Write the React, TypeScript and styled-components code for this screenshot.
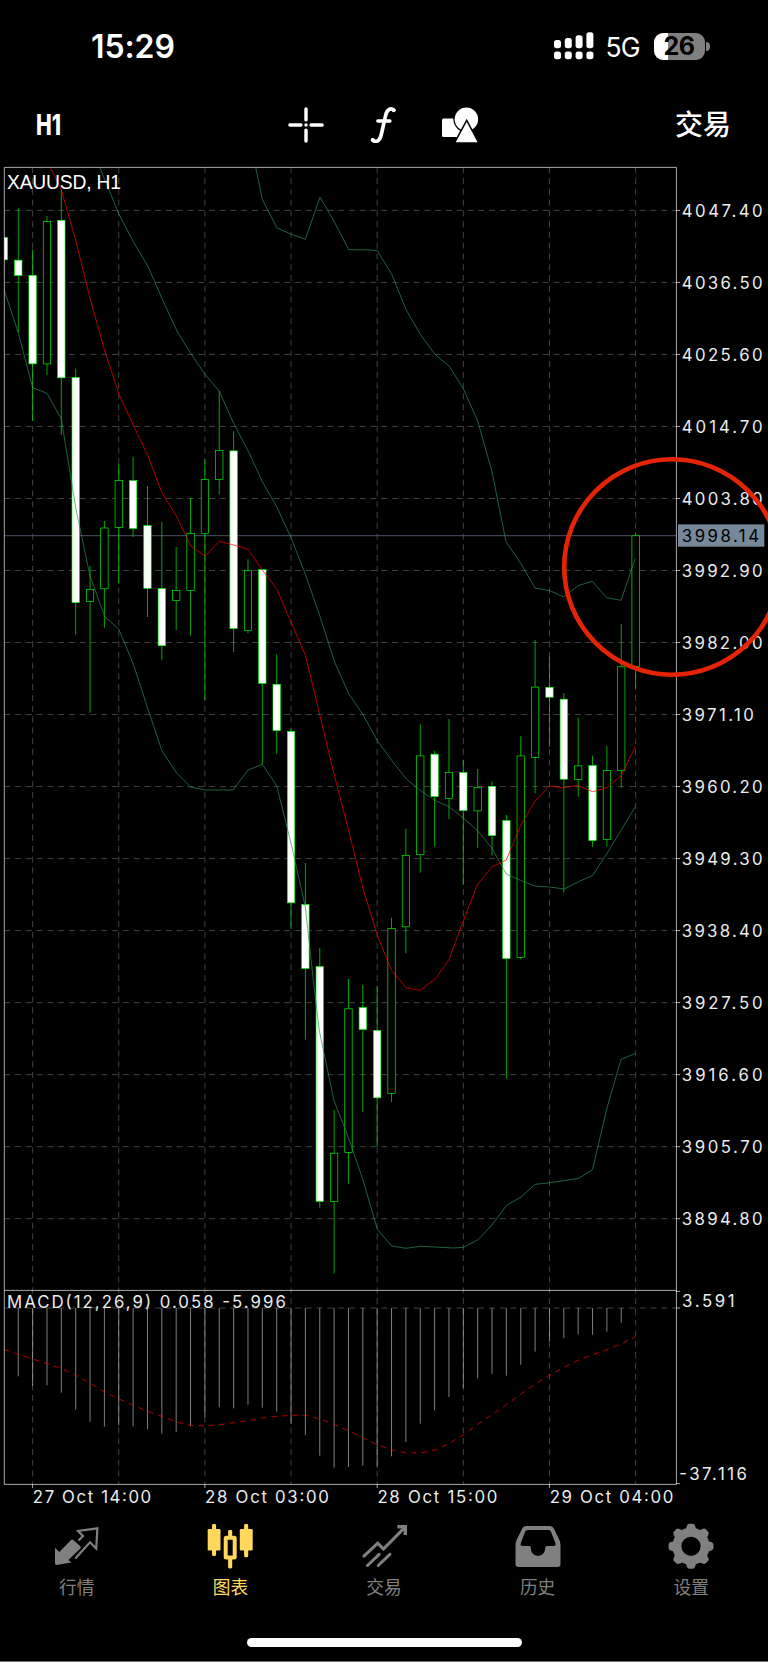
import React from "react";
import styled, { createGlobalStyle } from "styled-components";

const GlobalStyle = createGlobalStyle`
  html, body { margin: 0; padding: 0; background: #000; }
  * { box-sizing: border-box; }
`;

const Screen = styled.main`
  display: flex;
  flex-direction: column;
  width: 768px;
  height: 1662px;
  overflow: hidden;
  background: #000;
  color: #fff;
  font-family: Inter, "Noto Sans CJK SC", sans-serif;
  border-bottom: 1px solid #6e6e6e;
`;

const StatusBar = styled.header`
  display: flex;
  align-items: center;
  justify-content: space-between;
  height: 92px;
  padding: 0 58px 0 91px;
`;

const Clock = styled.time`
  padding-top: 2px;
  font-size: 32px;
  font-weight: 600;
  line-height: 40px;
  letter-spacing: -0.1px;
`;

const StatusGroup = styled.div`
  display: flex;
  align-items: center;
`;

const Network = styled.span`
  width: 60px;
  padding: 2px 0 0 12px;
  font-size: 26.5px;
  line-height: 32px;
  letter-spacing: -0.8px;
`;

const Battery = styled.div`
  display: flex;
  align-items: center;
  justify-content: center;
  width: 51px;
  height: 27px;
  border-radius: 9px;
  background: linear-gradient(90deg, #fff 0 13.5px, #808080 13.5px);
  color: #000;
  font-size: 25px;
  font-weight: 700;
  line-height: 27px;
  letter-spacing: -0.6px;
`;

const BatteryTip = styled.i`
  width: 4px;
  height: 9px;
  margin-left: 1.5px;
  border-radius: 0 5px 5px 0;
  background: #808080;
`;

const Toolbar = styled.nav`
  display: grid;
  grid-template-columns: 1fr auto 1fr;
  align-items: center;
  height: 65px;
  padding: 0 37px;
`;

const ToolButton = styled.button<{ $end?: boolean }>`
  justify-self: ${(p) => (p.$end ? "end" : "start")};
  padding: 0;
  border: 0;
  background: none;
  color: #fff;
  font: 500 28px/36px Inter, "Noto Sans CJK SC", sans-serif;
`;

const Timeframe = styled.span`
  display: inline-block;
  font-family: Inter, sans-serif;
  font-weight: 800;
  font-size: 28px;
  transform: translateX(-1px) scaleX(0.75);
  transform-origin: left center;
`;

const ToolGroup = styled.div`
  display: flex;
  align-items: center;
  gap: 42px;
  margin-right: 1px;
`;

const Chart = styled.svg`
  display: block;
  flex: none;
  width: 768px;
  height: 1358px;
  font-family: Inter, sans-serif;
`;

const AxisText = styled.text`
  fill: #ececec;
  font-size: 16.8px;
`;

const TabBar = styled.nav`
  display: grid;
  grid-template-columns: repeat(5, 1fr);
  height: 122px;
  padding-top: 7px;
`;

const Tab = styled.a<{ $active?: boolean }>`
  display: flex;
  flex-direction: column;
  align-items: center;
  color: ${(p) => (p.$active ? "#ffd85c" : "#808080")};
  font-size: 17.7px;
  line-height: 26px;
  gap: 5px;
`;

const HomeIndicator = styled.div`
  width: 275px;
  height: 9.6px;
  border-radius: 5px;
  margin: 0.7px auto 0;
  background: #fff;
`;

/* ---- chart data: x is derived from the bar index, y values are plot units ---- */
const X0 = 3.9;
const STEP = 14.357;
const bx = (i: number) => X0 + i * STEP;

type Bar = [number, number, number, number, 0 | 1]; // high, top, bottom, low, bearish
const bars: Bar[] = [
  [237.5, 237.5, 259.8, 259.8, 1], [207.7, 260.2, 275.4, 332, 1], [249.7, 275.3, 363.8, 421, 1],
  [216, 221.4, 363.9, 375, 0], [190, 220.3, 377.8, 435, 1], [368.7, 377.5, 602.5, 634.7, 1],
  [566, 589.5, 601.6, 712.7, 0], [521, 528, 588.8, 627.7, 0], [464, 480.5, 527.5, 583.3, 0],
  [456.7, 480.6, 528.4, 537, 1], [486, 525.6, 588.3, 617, 1], [522, 588.6, 645.7, 660.3, 1],
  [547, 590.5, 600.5, 630, 0], [497.7, 533.5, 590.3, 635.7, 0], [459.3, 479.5, 533.5, 700, 0],
  [391, 450.5, 479.5, 494.7, 0], [431.3, 450.9, 628.4, 652, 1], [559.3, 570.5, 630.5, 633.3, 0],
  [569, 569.6, 683.4, 764.7, 1], [654.5, 684.3, 730.5, 753.7, 1], [728.7, 731.5, 902.8, 929, 1],
  [863, 904.5, 968.4, 1039.7, 1], [948, 966.5, 1201.4, 1207.7, 1], [1110.3, 1153.2, 1201.5, 1273.3, 0],
  [979, 1008.8, 1152.4, 1183.7, 0], [985, 1007.6, 1029.5, 1112, 1], [986.7, 1030.4, 1097.8, 1146.7, 1],
  [917.7, 928.5, 1093.6, 1102, 0], [828.7, 855.5, 926.8, 953.3, 0], [724.3, 755.9, 854.6, 872.7, 0],
  [750.7, 754.2, 796.5, 846.7, 1], [719, 772.5, 798.3, 819, 0], [760, 772.5, 810.5, 884.7, 1],
  [769, 787.5, 810.9, 848, 0], [781.3, 786.5, 835.5, 855.7, 1], [815, 820.5, 958.5, 1078.5, 1],
  [736.3, 755.9, 957.3, 959.3, 0], [640, 687.1, 757.6, 793.3, 0], [656.7, 687.3, 697.2, 746.7, 1],
  [693, 699.2, 779.2, 892.7, 1], [717.3, 765.9, 779.6, 796.7, 0], [755.7, 765.5, 840.5, 846.7, 1],
  [746.3, 770.5, 839.5, 846.7, 0], [624, 666.8, 770.3, 787.7, 0], [532.7, 535.8, 666.6, 688.3, 0],
];

const upperBand =
  "255.7,167.3 262.3,199.3 277,228 291,234 305.3,239.3 320,197.3 334.6,222.3 348.7,249.7 366.7,249.8 377.3,250.6 391.7,274.3 406.3,310 420.3,334.3 435,354.3 449.3,366.3 463.3,388.7 477.7,421 492,471.7 500,511.7 506,541.7 521,563.7 535,588 550,590.7 563.7,597 578,585.7 592.3,581.3 606.7,597.7 621,600.3 635.3,558.3";
const middleBand =
  "99.7,167.3 110,192.3 118.7,213.7 133,241 148.3,267 162.3,299.3 177,331 190.7,353.3 205,374.3 219.3,391.3 233.7,423.3 249.3,453.3 262.3,481.7 276.7,506.7 291,537.7 305.3,574 320,616.5 334.6,662 348.7,693.7 363,714.7 377.3,740.7 391.7,760.3 406.3,779 420.3,790.3 434.7,800.3 449,806.7 463.3,818 477.7,830.7 492,848.3 506.3,874 520.3,880.3 535,886 549.3,887 564.3,889 578,882 592.7,875.3 606.7,854 621,830.3 635.3,806.7";
const lowerBand =
  "4,289.3 18.3,333 32.7,387.7 47,393.3 61.3,419 76,509.3 90,576 104.7,616.7 118.7,629 133.3,664 147.7,708.3 162,751 177,773.4 190.7,787 205.5,790 233,790 248,770 262.3,764.3 276.7,785.7 291,843.3 305.3,906.7 313.3,980 319.3,1030.7 334,1100.7 348.3,1137.3 363,1180 377.3,1229.3 391.7,1246 406,1248.3 420.3,1246.3 435,1247 453.3,1248 463.3,1247.3 477.7,1240 492,1225 506.4,1205.5 521,1197 535,1184.4 550,1182.7 578.4,1178.5 592.5,1169.6 607,1108 621,1059.4 635.3,1053.5";
const average =
  "50.3,167.3 61.3,190 75.7,240.3 90,298.3 104.3,349.3 119,394.3 133.3,425 147.7,455.3 162,492.7 176.3,515.7 190.7,546 205,556 219.3,541.3 233.7,545 248,549.3 262.3,570 277,589.5 291,622 305.3,655 320,715.7 334,774 348.3,829 363,888.7 377.3,935.3 391.7,970.7 406.3,987.7 420.3,990.3 435,979 449,959.5 463.3,920.7 477.7,884 492,867 506.3,860 520.3,826.3 535,801 549.3,786 563.7,788 577.3,785.3 592.7,791.7 606.7,787.7 621,776 635.3,746.3";
const signal =
  "4,1349.3 16.7,1353.7 32.7,1359 46.7,1363.7 61.3,1368.3 75.7,1375.3 90,1383.3 104.7,1392 119,1399 133.3,1405.3 147.7,1411.3 162,1416.3 176.7,1422 190.7,1425.3 205,1426 219.3,1424.7 233.7,1422.7 248,1420.7 262.3,1418 276.7,1416.3 291,1415.3 305.3,1415.3 319.7,1419 334,1424.3 348.3,1430.7 362.7,1437.7 377,1444.5 391.3,1449.7 405.7,1452.7 420,1453 434.3,1450.3 448.7,1443.7 463,1435 477.7,1424.3 492,1414.7 506.3,1404.7 520.7,1394.3 535,1384.3 549.7,1375 564,1367.3 578,1360.3 592.3,1354.7 606.7,1349.7 621,1344 635.3,1336.7";

const macd = [
  1376.3, 1386, 1385.3, 1392.7, 1409.7, 1421.7, 1426.7, 1425.3, 1426.3, 1429.3, 1433.7, 1432, 1426.3,
  1417.3, 1407.3, 1408.3, 1404.7, 1407.7, 1411.7, 1424, 1435, 1455.7, 1467.7, 1467, 1465.7, 1467.3,
  1456.3, 1442, 1423.7, 1410.3, 1397, 1388, 1378.3, 1373.7, 1375.7, 1364.7, 1351.7, 1341, 1338,
  1334.3, 1334.7, 1331.7, 1322.7,
];

const prices = [
  "4047.40", "4036.50", "4025.60", "4014.70", "4003.80", "3992.90", "3982.00", "3971.10",
  "3960.20", "3949.30", "3938.40", "3927.50", "3916.60", "3905.70", "3894.80",
];
const priceY = (i: number) => 210.4 + i * 72.02;
const gridX = [2, 8, 14, 20, 26, 32, 38, 44].map(bx);
// label, bar index, label width
const dates: [string, number, number][] = [
  ["27 Oct 14:00", 2, 118.4], ["28 Oct 03:00", 14, 123.8], ["28 Oct 15:00", 26, 120],
  ["29 Oct 04:00", 38, 123.6],
];

function PriceChart() {
  return (
    <Chart viewBox="0 157 768 1358">
      <defs>
        <clipPath id="plot">
          <rect x="4.3" y="167.3" width="672" height="1317" />
        </clipPath>
      </defs>

      <g stroke="#525252" strokeWidth="0.8" strokeDasharray="6 4.77" fill="none">
        {prices.map((p, i) => (
          <path key={p} d={`M4.3 ${priceY(i)}H676`} />
        ))}
        {gridX.map((x) => (
          <path key={x} d={`M${x} 167.3V1484`} />
        ))}
        <path d="M4.3 1308H676" />
      </g>

      <g clipPath="url(#plot)">
        <path d="M4 535.7H676" stroke="#4b5364" strokeWidth="1" />
        <g stroke="#00ff00" strokeWidth="0.66">
          {bars.map(([high, top, bottom, low, bear], i) => (
            <g key={i}>
              <path d={`M${bx(i)} ${high}V${top}M${bx(i)} ${bottom}V${low}`} />
              <rect
                x={bx(i) - 3.7}
                y={top}
                width="7.4"
                height={bottom - top}
                fill={bear ? "#fff" : "#000"}
              />
            </g>
          ))}
        </g>
        <g fill="none" strokeWidth="0.7">
          <g stroke="#2e8b57">
            <polyline points={upperBand} />
            <polyline points={middleBand} />
            <polyline points={lowerBand} />
          </g>
          <polyline points={average} stroke="#f00" />
        </g>
        <g stroke="#c0c0c0" strokeWidth="0.66">
          {macd.map((y, i) => (
            <path key={i} d={`M${bx(i + 1)} 1308V${y}`} />
          ))}
        </g>
        <polyline points={signal} fill="none" stroke="#f00" strokeWidth="0.7" strokeDasharray="5.6 4.9" />
      </g>

      <g stroke="#fff" strokeWidth="0.66" fill="none">
        <path d="M4.3 167.4H676.4V1484.4H4.3Z" />
        <path d="M4.3 1290.4H676.4" />
        {prices.map((p, i) => (
          <path key={p} d={`M676 ${priceY(i)}H680`} />
        ))}
        <path d="M676 1291.4H680M676 1308H680M676 1483.6H680" />
        {dates.map(([d, i]) => (
          <path key={d} d={`M${bx(i)} 1484V1488`} />
        ))}
      </g>

      <text x="7" y="189.3" fill="#fff" fontFamily="'Liberation Sans', sans-serif" fontSize="19.3" textLength="114">
        XAUUSD, H1
      </text>
      <AxisText x="7" y="1307.5" textLength="278.8">MACD(12,26,9) 0.058 -5.996</AxisText>
      {prices.map((p, i) => (
        <AxisText key={p} x="681.8" y={priceY(i) + 6.1} textLength={p === "3971.10" ? 72 : 80.8}>
          {p}
        </AxisText>
      ))}
      <AxisText x="682" y="1307.1" textLength="52.6">3.591</AxisText>
      <AxisText x="679.2" y="1479.5" textLength="67.8">-37.116</AxisText>
      {dates.map(([d, i, w]) => (
        <AxisText key={d} x={bx(i) + 0.2} y="1503.2" textLength={w}>
          {d}
        </AxisText>
      ))}

      <rect x="678" y="524.4" width="86.3" height="22.3" fill="#778899" />
      <text x="681.8" y="541.9" fontSize="16.8" fill="#000" textLength="77.2">3998.14</text>
      <circle cx="672" cy="567" r="107.8" fill="none" stroke="#e52405" strokeWidth="4.6" />
    </Chart>
  );
}

function SignalIcon() {
  const tops = [8, 6, 3.3, 0.2];
  return (
    <svg width="40" height="28" viewBox="0 0 40 28" fill="#fff">
      {tops.map((t, i) => (
        <g key={i}>
          <rect x={i * 10.8} y={t} width="7" height={16.2 - t} rx="2.6" />
          <rect x={i * 10.8} y="19.6" width="7" height="7.6" rx="2.6" />
        </g>
      ))}
    </svg>
  );
}

function CrosshairIcon() {
  return (
    <svg width="36" height="36" viewBox="0 0 36 36" stroke="#fff" strokeWidth="3.4" strokeLinecap="round">
      <path d="M1.9 18H12.9M23.1 18H34.1M18 1.9V12.9M18 23.1V34.1" />
      <circle cx="18" cy="18" r="1.7" fill="#fff" stroke="none" />
    </svg>
  );
}

function FunctionIcon() {
  return (
    <svg width="34" height="36" viewBox="0 0 34 36" fill="none" stroke="#fff" strokeLinecap="round" strokeLinejoin="round">
      <path d="M28 3.2C24.5 .4 20.8 2.6 19.6 8.5L15.3 27.5C14 33.5 10.5 36.2 6.6 33" strokeWidth="3.7" />
      <path d="M11.8 14H24" strokeWidth="3.3" />
      <circle cx="27.5" cy="3.3" r=".8" fill="#fff" strokeWidth="2" />
      <circle cx="6.8" cy="32.7" r=".8" fill="#fff" strokeWidth="2" />
    </svg>
  );
}

function ShapesIcon() {
  return (
    <svg width="37" height="36" viewBox="0 0 37 36">
      <rect x="0" y="11.5" width="20" height="18.5" rx="1.5" fill="#fff" />
      <circle cx="24.4" cy="12.3" r="13" fill="#000" />
      <circle cx="24.4" cy="12.3" r="11.7" fill="#fff" />
      <path d="M24.7 15L13.7 35.2H35.6Z" fill="#fff" stroke="#000" strokeWidth="3" paintOrder="stroke" />
    </svg>
  );
}

function QuotesIcon() {
  return (
    <svg width="48" height="48" viewBox="0 0 48 48">
      <path d="M2 25.7L6.3 30L17.8 18.2Q19 17 20.3 18.1L27.4 24.3Q28.4 25.3 27.4 26.4L15.4 38L18.5 40.5L3.4 43Q2 43 2 41.6Z" fill="currentColor" />
      <path d="M25.5 18.5L30 14L25 9L44.4 6.3L43.2 26.5L37 20.3L22.3 36.5" fill="none" stroke="currentColor" strokeWidth="2.2" strokeLinejoin="miter" />
    </svg>
  );
}

function CandlesIcon() {
  return (
    <svg width="48" height="48" viewBox="0 0 48 48" fill="currentColor">
      <rect x="1.7" y="7" width="12.8" height="21.4" rx="1.2" />
      <rect x="6" y="2" width="4.1" height="32" rx="1.4" />
      <rect x="33.8" y="7" width="12.9" height="21.4" rx="1.2" />
      <rect x="38.1" y="2" width="4.1" height="33.3" rx="1.4" />
      <rect x="19.7" y="15.7" width="9" height="19.8" rx=".5" fill="none" stroke="currentColor" strokeWidth="4" />
      <rect x="22.1" y="8" width="4.1" height="7" rx="1.4" />
      <rect x="22.1" y="36" width="4.1" height="10.4" rx="1.4" />
    </svg>
  );
}

function TradeIcon() {
  return (
    <svg width="48" height="48" viewBox="0 0 48 48" fill="none" stroke="currentColor" strokeWidth="3" strokeLinecap="round">
      <path d="M3.9 34.2L17.8 21.2L23.4 27L44.8 5.4M7.5 43.5L19.2 32.4M18.2 43.5L29.9 32.4" />
      <path d="M37.4 4.8H45.3V13" strokeLinecap="butt" strokeWidth="3.4" />
    </svg>
  );
}

function HistoryIcon() {
  return (
    <svg width="48" height="48" viewBox="0 0 48 48" fill="currentColor" fillRule="evenodd">
      <path d="M12 4H36Q38.8 4 39.8 6.6L45.4 18Q46.5 20.4 46.5 23V42Q46.5 45 43.5 45H4.5Q1.5 45 1.5 42V23Q1.5 20.4 2.6 18L8.2 6.6Q9.2 4 12 4ZM13.6 8Q11.9 8 11.3 9.5L6.9 20.8Q5.8 24 8.6 24H15Q16.8 24 16.8 26.2C17 30.8 20 33.8 24 33.8S31 30.8 31.2 26.2Q31.2 24 33 24H39.4Q42.4 24 41.3 20.8L36.9 9.5Q36.3 8 34.6 8Z" />
    </svg>
  );
}

function SettingsIcon() {
  const teeth = [0, 45, 90, 135, 180, 225, 270, 315];
  return (
    <svg width="48" height="48" viewBox="0 0 48 48">
      <circle cx="24" cy="24.3" r="14.1" fill="none" stroke="currentColor" strokeWidth="9" />
      {teeth.map((a) => (
        <path
          key={a}
          d="M17 8.5C19 7.4 19.2 6 19.8 4Q20.5 1.8 22.4 1.8H25.6Q27.5 1.8 28.2 4C28.8 6 29 7.4 31 8.5L29 12H19Z"
          fill="currentColor"
          transform={`rotate(${a} 24 24.3)`}
        />
      ))}
    </svg>
  );
}

const tabs = [
  { label: "行情", Icon: QuotesIcon },
  { label: "图表", Icon: CandlesIcon, active: true },
  { label: "交易", Icon: TradeIcon },
  { label: "历史", Icon: HistoryIcon },
  { label: "设置", Icon: SettingsIcon },
];

export default function App() {
  return (
    <Screen>
      <GlobalStyle />
      <StatusBar>
        <Clock>15:29</Clock>
        <StatusGroup>
          <SignalIcon />
          <Network>5G</Network>
          <StatusGroup>
            <Battery>26</Battery>
            <BatteryTip />
          </StatusGroup>
        </StatusGroup>
      </StatusBar>
      <Toolbar>
        <ToolButton><Timeframe>H1</Timeframe></ToolButton>
        <ToolGroup>
          <CrosshairIcon />
          <FunctionIcon />
          <ShapesIcon />
        </ToolGroup>
        <ToolButton $end>交易</ToolButton>
      </Toolbar>
      <PriceChart />
      <TabBar>
        {tabs.map(({ label, Icon, active }) => (
          <Tab key={label} $active={active}>
            <Icon />
            {label}
          </Tab>
        ))}
      </TabBar>
      <HomeIndicator />
    </Screen>
  );
}
